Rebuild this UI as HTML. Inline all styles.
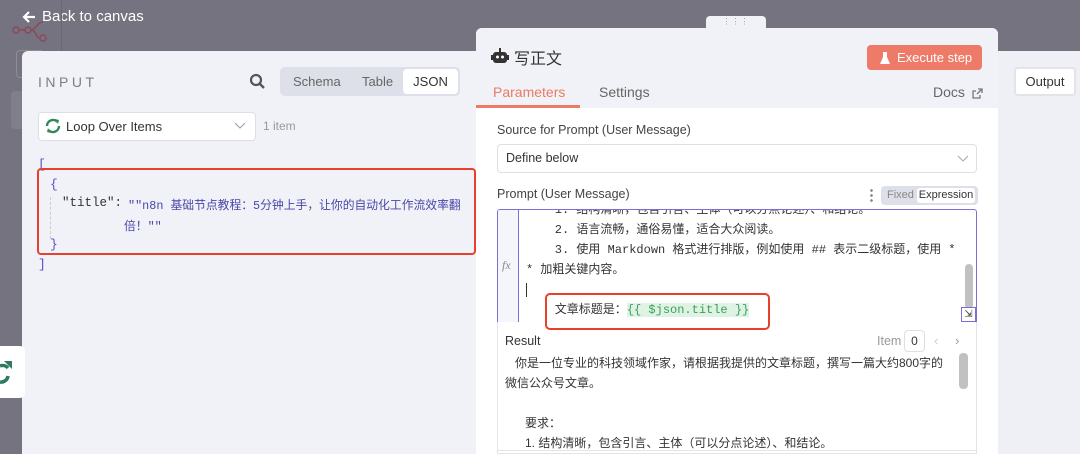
<!DOCTYPE html>
<html><head><meta charset="utf-8"><style>
*{box-sizing:border-box;margin:0;padding:0}
body{width:1080px;height:454px;overflow:hidden;background:#75737f;font-family:"Liberation Sans","Noto Sans CJK SC",sans-serif;position:relative;color:#333}
.abs{position:absolute}
.mono{font-family:"Liberation Mono","Noto Sans CJK SC",monospace}
</style></head><body>
<div class="abs" style="left:8px;top:6px;width:52px;height:30px">
<svg width="52" height="30" style="position:absolute;left:0;top:8px"><g stroke="#8a4a5a" stroke-width="1.5" fill="none"><circle cx="8" cy="16" r="3"/><circle cx="20" cy="16" r="3"/><circle cx="35" cy="24" r="3"/><path d="M11 16h6M23 16c5 0 5 8 9 8M23 16c5 0 6-8 12-8"/></g></svg>
</div>
<div class="abs" style="left:22px;top:8px;color:#fff;font-size:15px;display:flex;align-items:center;gap:6px">
<svg width="14" height="14" viewBox="0 0 14 14"><path d="M13 7H2M7 2L2 7l5 5" stroke="#fff" stroke-width="2.2" fill="none"/></svg>Back to canvas</div>
<div class="abs" style="left:61px;top:0;width:1px;height:52px;background:#6a6874"></div>
<div class="abs" style="left:16px;top:50px;width:28px;height:28px;border:1px solid #8e8c97;border-radius:4px"></div>
<div class="abs" style="left:11px;top:91px;width:15px;height:38px;background:#807e8a;border-radius:4px"></div>

<div class="abs" style="left:22px;top:51px;width:456px;height:403px;background:#f0f2f8;border-radius:6px 0 0 0"></div>
<div class="abs" style="left:38px;top:74px;font-size:14px;letter-spacing:3.5px;color:#7d7d87">INPUT</div>
<svg class="abs" style="left:249px;top:73px" width="17" height="17" viewBox="0 0 17 17"><circle cx="7" cy="7" r="5" stroke="#555" stroke-width="2.2" fill="none"/><path d="M11 11l4 4" stroke="#555" stroke-width="2.4"/></svg>
<div class="abs" style="left:280px;top:67px;width:180px;height:29px;background:#dde0e8;border-radius:5px"></div>
<div class="abs" style="left:293px;top:74px;font-size:13px;color:#666">Schema</div>
<div class="abs" style="left:362px;top:74px;font-size:13px;color:#666">Table</div>
<div class="abs" style="left:403px;top:69px;width:55px;height:25px;background:#fff;border-radius:4px;font-size:13px;color:#333;text-align:center;line-height:25px">JSON</div>
<div class="abs" style="left:38px;top:112px;width:218px;height:29px;background:#fff;border:1px solid #dcdfe6;border-radius:4px"></div>
<svg class="abs" style="left:45px;top:117px" width="16" height="18" viewBox="0 0 16 18"><g stroke="#2e8b57" stroke-width="2.4" fill="none"><path d="M2 9a6 6 0 0 1 10.5-4"/><path d="M14 9a6 6 0 0 1-10.5 4"/></g><path d="M10 2l4 1-1 4z M6 16l-4-1 1-4z" fill="#2e8b57"/></svg>
<div class="abs" style="left:66px;top:119px;font-size:13px;color:#333">Loop Over Items</div>
<svg class="abs" style="left:234px;top:122px" width="12" height="8"><path d="M1 1l5 5 5-5" stroke="#999" fill="none"/></svg>
<div class="abs" style="left:263px;top:119px;font-size:12px;color:#999">1 item</div>
<div class="abs mono" style="left:38px;top:157px;font-size:13px;color:#5b4fc4">[</div>
<div class="abs mono" style="left:50px;top:177px;font-size:13px;color:#5b4fc4">{</div>
<div class="abs" style="left:50px;top:197px;width:1px;height:42px;border-left:1px dashed #ccc"></div>
<div class="abs mono" style="left:62px;top:196px;font-size:12.5px;color:#333">"title":</div>
<div class="abs mono" style="left:128px;top:196px;font-size:11.8px;color:#4a45a8;line-height:21px;white-space:nowrap">""n8n 基础节点教程：5分钟上手，让你的自动化工作流效率翻</div>
<div class="abs mono" style="left:124px;top:217px;font-size:11.8px;color:#4a45a8;line-height:21px;white-space:nowrap">倍！""</div>
<div class="abs mono" style="left:50px;top:237px;font-size:13px;color:#5b4fc4">}</div>
<div class="abs mono" style="left:38px;top:257px;font-size:13px;color:#5b4fc4">]</div>
<div class="abs" style="left:37px;top:168px;width:439px;height:87px;border:2px solid #e8402a;border-radius:4px"></div>
<div class="abs" style="left:-6px;top:346px;width:31px;height:52px;background:#fff;border-radius:5px"></div>
<svg class="abs" style="left:0;top:358px" width="14" height="28" viewBox="0 0 14 28"><path d="M0 8a7 7 0 0 1 8 2M8 18a7 7 0 0 1-8 6" stroke="#2f7a5c" stroke-width="3.5" fill="none"/><path d="M4 3h8v8z" fill="#2f7a5c"/></svg>

<div class="abs" style="left:996px;top:51px;width:84px;height:403px;background:#eff0f5"></div>
<div class="abs" style="left:1014px;top:67px;width:62px;height:29px;background:#fff;border:2px solid #e2e4ea;border-radius:4px;font-size:13px;text-align:center;line-height:25px;color:#333">Output</div>

<div class="abs" style="left:706px;top:16px;width:60px;height:14px;background:#f1f2f7;border-radius:4px 4px 0 0;text-align:center;font-size:8px;color:#999;letter-spacing:1px;line-height:12px">⋮⋮⋮</div>
<div class="abs" style="left:476px;top:28px;width:522px;height:426px;background:#fff;border-radius:6px 6px 0 0;overflow:hidden">
 <div style="position:absolute;left:0;top:0;width:522px;height:80px;background:#f1f2f7"></div>
</div>
<svg class="abs" style="left:491px;top:47px" width="18" height="18" viewBox="0 0 18 18"><rect x="2" y="5" width="14" height="11" rx="3" fill="#333"/><rect x="8" y="1" width="2" height="4" fill="#333"/><circle cx="6.5" cy="10" r="1.5" fill="#fff"/><circle cx="11.5" cy="10" r="1.5" fill="#fff"/><rect x="0" y="8" width="2" height="5" fill="#333"/><rect x="16" y="8" width="2" height="5" fill="#333"/></svg>
<div class="abs" style="left:514px;top:45px;font-size:16px;color:#333">写正文</div>
<div class="abs" style="left:867px;top:45px;width:115px;height:25px;background:#ee7a68;border-radius:4px;color:#fff;font-size:13px;line-height:25px;padding-left:30px;white-space:nowrap">Execute step</div>
<svg class="abs" style="left:879px;top:51px" width="12" height="14" viewBox="0 0 12 14"><path d="M3 1h6M4 1v5L1 13h10L8 6V1z" fill="#fff"/></svg>
<div class="abs" style="left:493px;top:84px;font-size:14px;color:#ec7a66">Parameters</div>
<div class="abs" style="left:476px;top:105px;width:104px;height:3px;background:#ec7a66"></div>
<div class="abs" style="left:599px;top:84px;font-size:14px;color:#666">Settings</div>
<div class="abs" style="left:933px;top:84px;font-size:14px;color:#666">Docs</div>
<svg class="abs" style="left:972px;top:88px" width="11" height="11" viewBox="0 0 11 11"><path d="M6 1h4v4M10 1L5 6M8 7v3H1V3h3" stroke="#777" stroke-width="1.3" fill="none"/></svg>

<div class="abs" style="left:497px;top:123px;font-size:12.5px;color:#444">Source for Prompt (User Message)</div>
<div class="abs" style="left:497px;top:144px;width:480px;height:29px;border:1px solid #dcdfe6;border-radius:4px;font-size:12.5px;color:#333;line-height:27px;padding-left:8px">Define below</div>
<svg class="abs" style="left:957px;top:155px" width="12" height="8"><path d="M1 1l5 5 5-5" stroke="#aaa" fill="none"/></svg>
<div class="abs" style="left:497px;top:187px;font-size:12.5px;color:#444">Prompt (User Message)</div>
<div class="abs" style="left:870px;top:188px;width:3px;height:15px;background:radial-gradient(circle,#888 1.2px,transparent 1.5px) 0 0/3px 5px"></div>
<div class="abs" style="left:881px;top:186px;width:97px;height:19px;background:#dde0e8;border-radius:4px"></div>
<div class="abs" style="left:887px;top:189px;font-size:11px;color:#888">Fixed</div>
<div class="abs" style="left:917px;top:188px;width:58px;height:15px;background:#fff;border-radius:3px;font-size:11px;color:#333;text-align:center;line-height:15px">Expression</div>

<div class="abs" style="left:497px;top:209px;width:480px;height:114px;border:1px solid #7b6fd6;border-radius:3px 3px 0 0;overflow:hidden;background:#fff">
 <div style="position:absolute;left:0;top:0;width:21px;height:114px;background:#f5f6fa;border-right:1px solid #7b6fd6"></div>
 <div style="position:absolute;left:4px;top:48px;font-family:'Liberation Serif',serif;font-style:italic;font-size:12px;color:#888">fx</div>
 <div class="mono" style="position:absolute;left:28px;top:-10px;font-size:12px;line-height:20px;color:#333;width:430px;white-space:nowrap">
  &nbsp;&nbsp;&nbsp;&nbsp;1. 结构清晰，包含引言、主体（可以分点论述）、和结论。<br>
  &nbsp;&nbsp;&nbsp;&nbsp;2. 语言流畅，通俗易懂，适合大众阅读。<br>
  &nbsp;&nbsp;&nbsp;&nbsp;3. 使用 Markdown 格式进行排版，例如使用 ## 表示二级标题，使用 *<br>
  * 加粗关键内容。<br>
  <span style="border-left:1px solid #333">&nbsp;</span><br>
  &nbsp;&nbsp;&nbsp;&nbsp;文章标题是：<span style="background:#dff3e4;color:#3aa05a">{{ $json.title }}</span>
 </div>
 <div style="position:absolute;right:3px;top:54px;width:8px;height:45px;background:#c1c1c1;border-radius:4px"></div>
 <div style="position:absolute;right:0;bottom:0;width:15px;height:15px;border:1px solid #7b6fd6;background:#fff;font-size:10px;line-height:13px;text-align:center">⇲</div>
</div>

<div class="abs" style="left:497px;top:322px;width:480px;height:132px;border:1px solid #e2e4ea;border-top:none;background:#fff"></div>
<div class="abs" style="left:545px;top:293px;width:225px;height:37px;border:2px solid #e8402a;border-radius:5px"></div>
<div class="abs" style="left:505px;top:334px;font-size:12.5px;color:#333">Result</div>
<div class="abs" style="left:877px;top:334px;font-size:12.5px;color:#999">Item</div>
<div class="abs" style="left:904px;top:330px;width:21px;height:22px;border:1px solid #dcdfe6;border-radius:4px;font-size:12px;text-align:center;line-height:20px;color:#333">0</div>
<div class="abs" style="left:934px;top:333px;font-size:13px;color:#ccc">‹</div>
<div class="abs" style="left:955px;top:333px;font-size:13px;color:#999">›</div>
<div class="abs" style="left:505px;top:353px;font-size:12px;line-height:20px;color:#333;white-space:nowrap">&nbsp;&nbsp;&nbsp;你是一位专业的科技领域作家，请根据我提供的文章标题，撰写一篇大约800字的<br>微信公众号文章。<br><br>&nbsp;&nbsp;&nbsp;&nbsp;&nbsp;&nbsp;要求：<br>&nbsp;&nbsp;&nbsp;&nbsp;&nbsp;&nbsp;1. 结构清晰，包含引言、主体（可以分点论述）、和结论。</div>
<div class="abs" style="left:959px;top:353px;width:9px;height:36px;background:#c1c1c1;border-radius:4px"></div>
<div class="abs" style="left:497px;top:450px;width:480px;height:1px;background:#e2e4ea"></div>
</body></html>
